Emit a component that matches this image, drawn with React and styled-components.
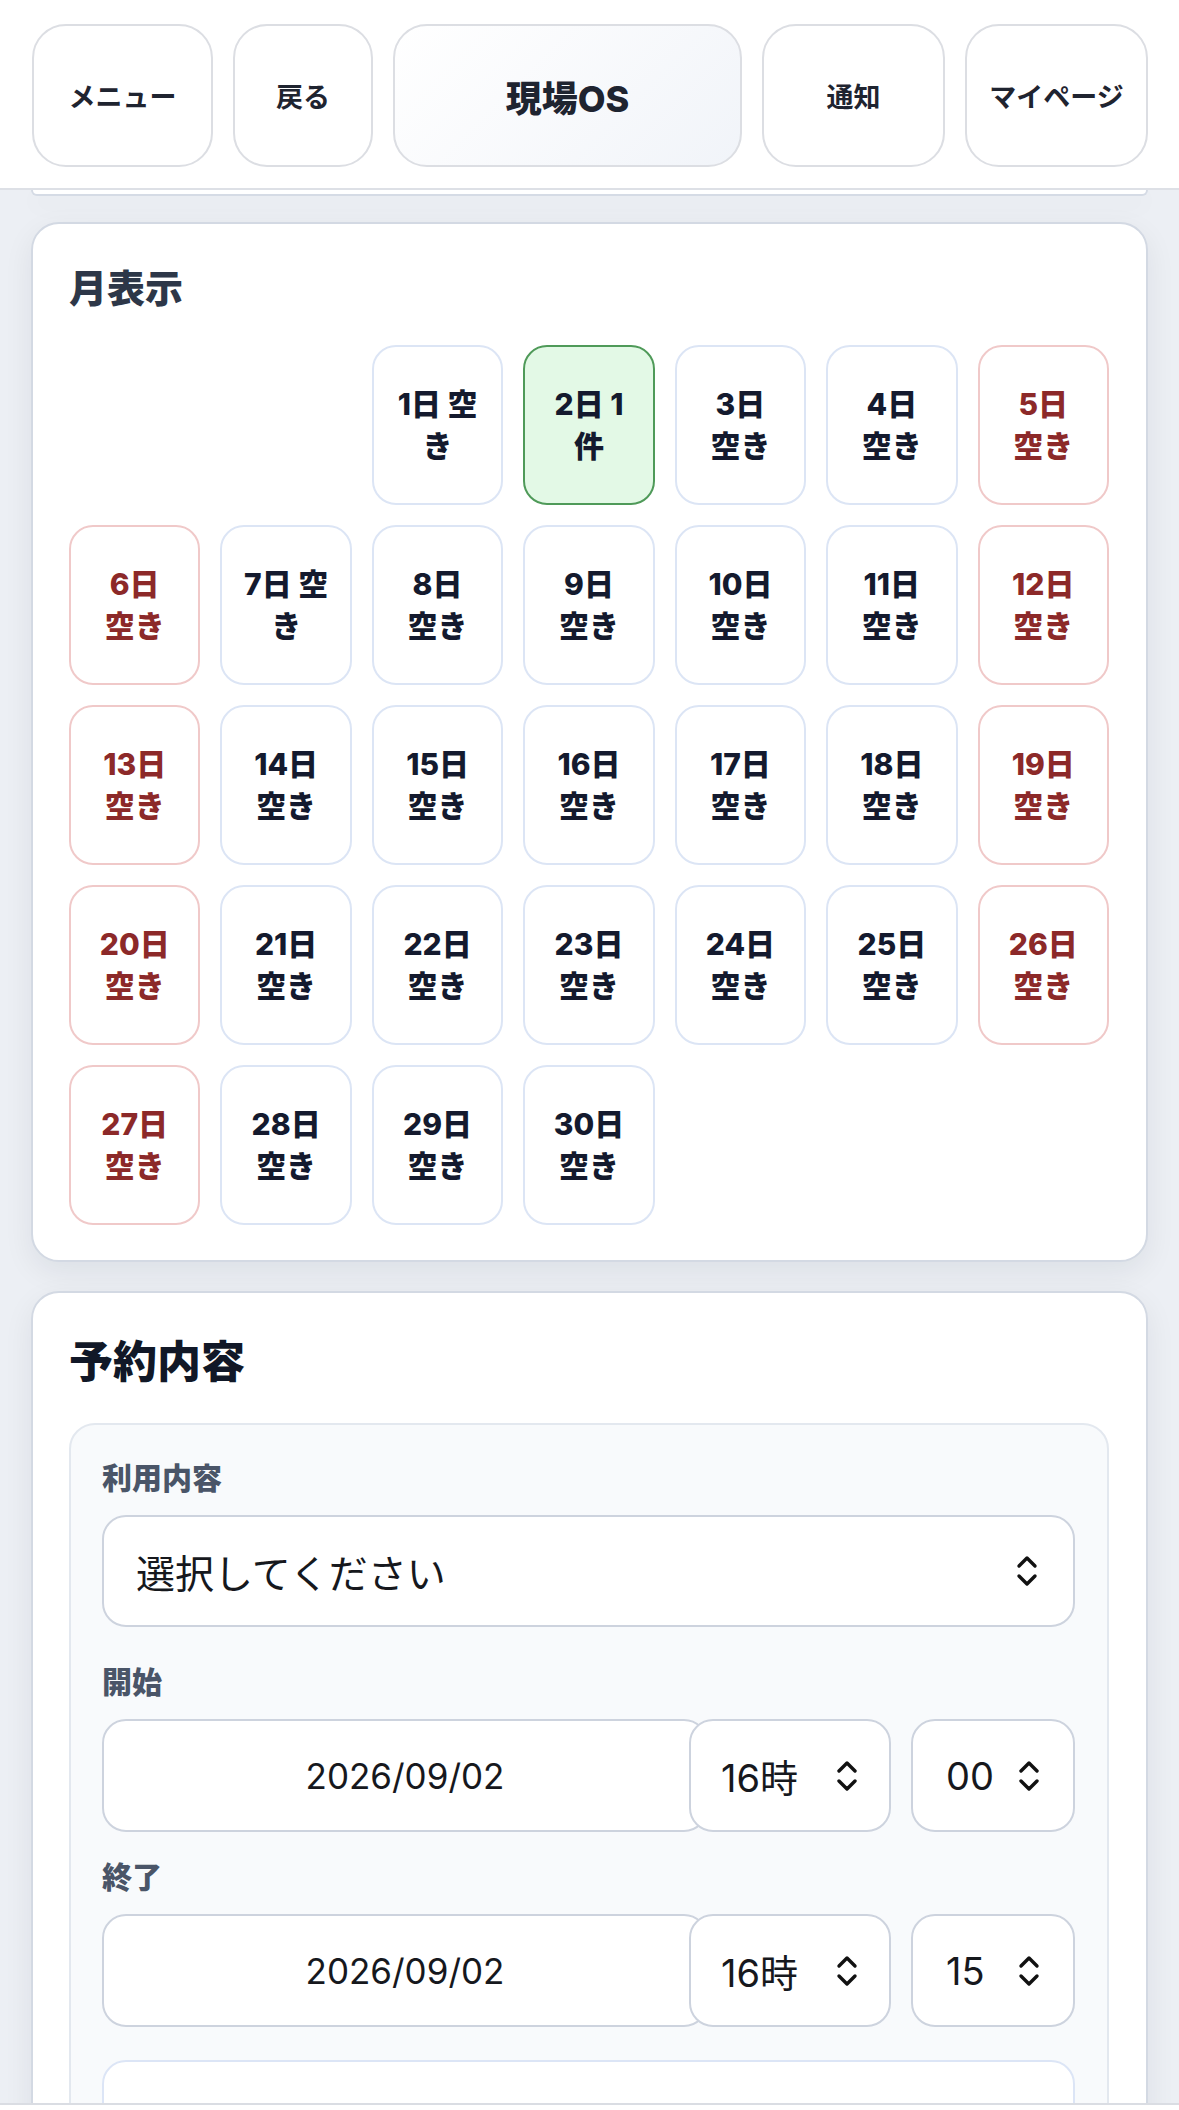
import React from "react";
import styled, { createGlobalStyle } from "styled-components";

const GlobalStyle = createGlobalStyle`
  html, body {
    margin: 0;
    padding: 0;
  }
  body {
    background: #eceff4;
    font-family: Inter, "Noto Sans CJK JP", sans-serif;
    color: #141a2e;
  }
`;

const Screen = styled.div`
  height: 100vh;
  display: flex;
  flex-direction: column;
  overflow: hidden;
`;

const TopBar = styled.header`
  flex: none;
  display: grid;
  grid-template-columns: 181px 140px 1fr 183px 183px;
  gap: 20px;
  padding: 24px 31px 21px 32px;
  background: #fff;
  border-bottom: 2px solid #dde0e6;
`;

const NavButton = styled.button`
  height: 143px;
  border: 2px solid #dcdee3;
  border-radius: 34px;
  background: ${(p) =>
    p.$title ? "linear-gradient(135deg, #ffffff 0%, #f1f4f9 100%)" : "#fff"};
  font-family: inherit;
  font-size: ${(p) => (p.$title ? "36px" : "27px")};
  font-weight: ${(p) => (p.$title ? 800 : 700)};
  color: #1f2430;
  padding: 0;
`;

const Main = styled.main`
  flex: 1;
  overflow: hidden;
  padding: 0 31px;
`;

const CardTail = styled.div`
  height: 4px;
  background: #fff;
  border: 2px solid #d5dbe5;
  border-top: none;
  border-radius: 0 0 26px 26px;
  box-shadow: 0 8px 24px rgba(15, 23, 42, 0.06);
`;

const Card = styled.section`
  margin-top: ${(p) => p.$top || 28}px;
  background: #fff;
  border: 2px solid #d3d9e3;
  border-radius: 28px;
  padding: 40px 37px 35px 36px;
  box-shadow: 0 10px 30px rgba(15, 23, 42, 0.07);
`;

const MonthTitle = styled.h2`
  margin: 0 0 33px;
  font-size: 38px;
  line-height: 48px;
  font-weight: 800;
  color: #2d3748;
`;

const CalendarGrid = styled.div`
  display: grid;
  grid-template-columns: repeat(7, 1fr);
  grid-auto-rows: 160px;
  gap: 20px;
`;

const cellTheme = {
  normal: { border: "#dce5f5", bg: "#fff", color: "#141a2e" },
  weekend: { border: "#f0c9c9", bg: "#fff", color: "#8c2929" },
  booked: { border: "#4f9a59", bg: "#e3f9e6", color: "#141a2e" },
};

const DayCell = styled.div`
  display: flex;
  flex-direction: column;
  align-items: center;
  justify-content: center;
  border: 2.5px solid ${(p) => cellTheme[p.$kind].border};
  background: ${(p) => cellTheme[p.$kind].bg};
  color: ${(p) => cellTheme[p.$kind].color};
  border-radius: 24px;
  font-size: 30px;
  line-height: 42px;
  font-weight: 800;
  text-align: center;
  white-space: pre;
`;

const SectionTitle = styled.h2`
  margin: 0 0 32px;
  font-size: 44px;
  line-height: 58px;
  font-weight: 800;
  color: #111827;
`;

const Panel = styled.div`
  background: #f8fafc;
  border: 2px solid #e3e8ef;
  border-radius: 26px;
  padding: 32px 32px 32px 31px;
`;

const Field = styled.div`
  margin-bottom: ${(p) => p.$after || 0}px;
`;

const Label = styled.div`
  font-size: 30px;
  line-height: 42px;
  font-weight: 800;
  color: #4a5568;
  margin-bottom: 16px;
`;

const Control = styled.div`
  box-sizing: border-box;
  height: ${(p) => p.$h || 113}px;
  display: flex;
  align-items: center;
  background: #fff;
  border: 2px solid #cdd3de;
  border-radius: 24px;
  font-size: ${(p) => p.$fs || 38}px;
  color: #16181d;
`;

const SelectBox = styled(Control)`
  justify-content: space-between;
  padding: 0 ${(p) => p.$pr || 32}px 0 ${(p) => p.$pl || 32}px;
`;

const DateBox = styled(Control)`
  flex: 0 0 606px;
  justify-content: center;
  font-size: 35px;
`;

const TimeRow = styled.div`
  display: flex;
`;

const HourBox = styled(SelectBox)`
  flex: 0 0 202px;
  margin-left: -19px;
  position: relative;
  z-index: 1;
`;

const MinuteBox = styled(SelectBox)`
  flex: 0 0 164px;
  margin-left: 20px;
`;

const NoteBox = styled.div`
  margin-top: 33px;
  height: 200px;
  background: #fff;
  border: 2px solid #dce5f6;
  border-radius: 24px;
`;

const BottomBar = styled.footer`
  flex: none;
  height: 5px;
  background: #fff;
  border-top: 2px solid #dadde3;
`;

const UpDown = () => (
  <svg width="24" height="34" viewBox="0 0 24 34" fill="none">
    <path
      d="M4 12 L12 4 L20 12 M4 22 L12 30 L20 22"
      stroke="#111"
      strokeWidth="3.4"
      strokeLinecap="round"
      strokeLinejoin="round"
    />
  </svg>
);

const labelFor = (d) => {
  if (d === 1) return "1日 空\nき";
  if (d === 7) return "7日 空\nき";
  if (d === 2) return "2日 1\n件";
  return `${d}日\n空き`;
};

const days = Array.from({ length: 30 }, (_, i) => {
  const d = i + 1;
  const dow = (i + 2) % 7;
  let kind = "normal";
  if (dow === 0 || dow === 6) kind = "weekend";
  if (d === 2) kind = "booked";
  return { d, kind };
});

const TimeFields = ({ label, minute, after }) => (
  <Field $after={after}>
    <Label>{label}</Label>
    <TimeRow>
      <DateBox>2026/09/02</DateBox>
      <HourBox $pl={30} $pr={30}>
        <span>16時</span>
        <UpDown />
      </HourBox>
      <MinuteBox $pl={33} $pr={32}>
        <span>{minute}</span>
        <UpDown />
      </MinuteBox>
    </TimeRow>
  </Field>
);

const App = () => (
  <Screen>
    <GlobalStyle />
    <TopBar>
      <NavButton>メニュー</NavButton>
      <NavButton>戻る</NavButton>
      <NavButton $title>現場OS</NavButton>
      <NavButton>通知</NavButton>
      <NavButton>マイページ</NavButton>
    </TopBar>

    <Main>
      <CardTail />

      <Card $top={26}>
        <MonthTitle>月表示</MonthTitle>
        <CalendarGrid>
          <div />
          <div />
          {days.map((day) => (
            <DayCell key={day.d} $kind={day.kind}>
              {labelFor(day.d)}
            </DayCell>
          ))}
        </CalendarGrid>
      </Card>

      <Card $top={29}>
        <SectionTitle>予約内容</SectionTitle>
        <Panel>
          <Field $after={34}>
            <Label>利用内容</Label>
            <SelectBox $h={112} $pr={34} $fs={39}>
              <span>選択してください</span>
              <UpDown />
            </SelectBox>
          </Field>

          <TimeFields label="開始" minute="00" after={24} />
          <TimeFields label="終了" minute="15" />

          <NoteBox />
        </Panel>
      </Card>
    </Main>

    <BottomBar />
  </Screen>
);

export default App;
